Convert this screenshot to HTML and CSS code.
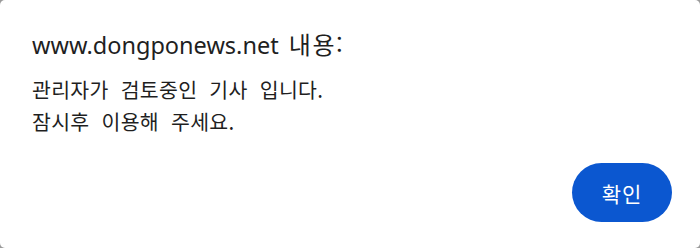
FILE: index.html
```html
<!DOCTYPE html>
<html lang="ko">
  <head>
    <meta charset="utf-8" />
    <title>www.dongponews.net 내용</title>
    <link rel="stylesheet" href="styles.css">
  </head>
  <body>
    <div class="dialog">
      <div class="dialog-title">www.dongponews.net <span class="ko">내용:</span></div>
      <div class="dialog-message">
        관리자가 검토중인 기사 입니다.<br />
        잠시후 이용해 주세요.
      </div>
      <div class="dialog-buttons">
        <button type="button" class="ok-button">확인</button>
      </div>
    </div>
  </body>
</html>
```

FILE: styles.css
```css
html,
body {
  margin: 0;
  height: 100%;
  background-color: #9a9a9a;
}

body {
  font-family: "Noto Sans", "Noto Sans CJK KR", sans-serif;
  color: #1f1f1f;
}

.dialog {
  box-sizing: border-box;
  height: 248px;
  background-color: #fff;
  border-radius: 5px;
  padding: 28px 28px 0 32px;
  display: flex;
  flex-direction: column;
}

.dialog-title {
  font-size: 23.5px;
  line-height: 32px;
}

.dialog-title .ko {
  font-family: "Noto Sans CJK KR", sans-serif;
  font-size: 24px;
  letter-spacing: 1.5px;
  margin-left: 4px;
}

.dialog-message {
  margin-top: 12px;
  font-family: "Noto Sans CJK KR", sans-serif;
  font-size: 20.5px;
  line-height: 32px;
  letter-spacing: 0.3px;
  word-spacing: 6px;
}

.dialog-buttons {
  display: flex;
  justify-content: flex-end;
  margin-top: 26px;
}

.ok-button {
  width: 100px;
  height: 59px;
  border: none;
  border-radius: 30px;
  background-color: #0b57d0;
  color: #fff;
  font-family: "Noto Sans CJK KR", sans-serif;
  font-size: 21px;
  letter-spacing: 1px;
  cursor: pointer;
}
```
